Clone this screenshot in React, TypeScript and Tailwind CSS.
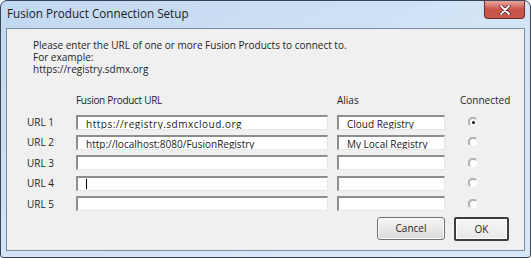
import React from "react";

const font = { fontFamily: '"Open Sans", "Noto Sans", Arial, sans-serif' };

function Radio({ checked }: { checked?: boolean }) {
  return (
    <svg width="11" height="11" viewBox="0 0 11 11">
      <circle cx="5.5" cy="5.5" r="4.5" fill="#ffffff" />
      <path d="M1.5 8.5 A4.5 4.5 0 0 1 8.5 1.5" fill="none" stroke="#a8a8a8" strokeWidth="1" />
      <path d="M2.3 7.7 A3.5 3.5 0 0 1 7.7 2.3" fill="none" stroke="#7a7a7a" strokeWidth="0.8" />
      <path d="M8.5 1.5 A4.5 4.5 0 0 1 1.5 8.5" fill="none" stroke="#ececec" strokeWidth="1" />
      {checked && <circle cx="5.5" cy="5.5" r="1.5" fill="#111" />}
    </svg>
  );
}

function Field({ w, value, cursor, wide }: { w: string; value?: string; cursor?: boolean; wide?: boolean }) {
  return (
    <div
      className={`${w} h-[15px] bg-white border-t-2 border-l-2 border-t-[#8e8e8e] border-l-[#8e8e8e] border-r border-b border-r-[#e6e6e6] border-b-[#e6e6e6] flex items-end pl-[8px] overflow-hidden`}
    >
      {value && (
        <span
          className={`text-[10px] leading-[12px] text-[#1a1a1a] whitespace-nowrap translate-y-[1px] ${
            wide ? "tracking-[0.5px]" : ""
          }`}
        >
          {value}
        </span>
      )}
      {cursor && <span className="w-px h-[10px] bg-black mb-[1px]" />}
    </div>
  );
}

const rows = [
  { label: "URL 1", url: "https://registry.sdmxcloud.org", alias: "Cloud Registry", checked: true, wide: true },
  { label: "URL 2", url: "http://localhost:8080/FusionRegistry", alias: "My Local Registry" },
  { label: "URL 3", url: "", alias: "" },
  { label: "URL 4", url: "", alias: "", cursor: true },
  { label: "URL 5", url: "", alias: "" },
];

export default function App() {
  return (
    <div className="w-[531px] h-[258px] bg-white" style={font}>
      <div className="w-[531px] h-[258px] rounded-t-[7px] rounded-b-[3px] border border-[#3a4656] bg-gradient-to-br from-[#c0d8f1] via-[#d3e4f6] to-[#d6e7f8] flex flex-col px-[5px] pb-[6px] relative">
        {/* title bar */}
        <div className="h-[27px] flex items-center pl-[1px] shrink-0">
          <span className="text-[11.7px] text-[#1b1b1b] leading-none mt-[-1px]">Fusion Product Connection Setup</span>
        </div>
        {/* close button */}
        <div className="absolute right-[5px] top-0 w-[41px] h-[18px] rounded-b-[4px] border border-t-0 border-[#6e2a2a] bg-gradient-to-b from-[#e7a59f] via-[#c9544a] to-[#c55a4e] flex items-center justify-center">
          <svg width="12" height="10" viewBox="0 0 12 10">
            <path d="M2 1 L10 9 M10 1 L2 9" stroke="#5a1f1f" strokeWidth="3.4" strokeLinecap="round" />
            <path d="M2 1 L10 9 M10 1 L2 9" stroke="#ffffff" strokeWidth="1.8" strokeLinecap="round" />
          </svg>
        </div>
        {/* client */}
        <div className="flex-1 border border-[#7b8ba0] bg-[#f0f0f0] flex flex-col text-[#1e1e1e]">
          <div className="pl-[26px] pt-[9.5px] text-[10px] leading-[12px]">
            <div>Please enter the URL of one or more Fusion Products to connect to.</div>
            <div>For example:</div>
            <div>https://registry.sdmx.org</div>
          </div>
          <div className="flex text-[10px] leading-[12px] mt-[19px] pl-[69px]">
            <div className="w-[261px] tracking-[-0.3px]">Fusion Product URL</div>
            <div className="w-[123px]">Alias</div>
            <div>Connected</div>
          </div>
          <div className="flex flex-col gap-[5.4px] mt-[9px] pl-[20px]">
            {rows.map((r) => (
              <div key={r.label} className="flex items-center h-[15px]">
                <div className="w-[49px] text-[10px] leading-none">{r.label}</div>
                <Field w="w-[252px]" value={r.url} cursor={r.cursor} wide={r.wide} />
                <div className="w-[9px]" />
                <Field w="w-[108px]" value={r.alias} />
                <div className="ml-[23px] mt-[1px]">
                  <Radio checked={r.checked} />
                </div>
              </div>
            ))}
          </div>
          <div className="flex justify-end gap-[9px] pr-[15px] mt-[6px]">
            <div className="w-[68px] h-[23px] rounded-[3px] border border-[#707070] bg-gradient-to-b from-[#f4f4f4] via-[#e9e9e9] to-[#d9d9d9] shadow-[inset_0_0_0_1px_#fbfbfb] flex items-center justify-center text-[10px]">
              Cancel
            </div>
            <div className="w-[55px] h-[24px] rounded-[2px] border-2 border-[#3c3c3c] bg-gradient-to-b from-[#f6f6f6] to-[#e8e8e8] shadow-[inset_0_0_0_1px_#ffffff] flex items-center justify-center text-[10px]">
              OK
            </div>
          </div>
        </div>
      </div>
    </div>
  );
}
